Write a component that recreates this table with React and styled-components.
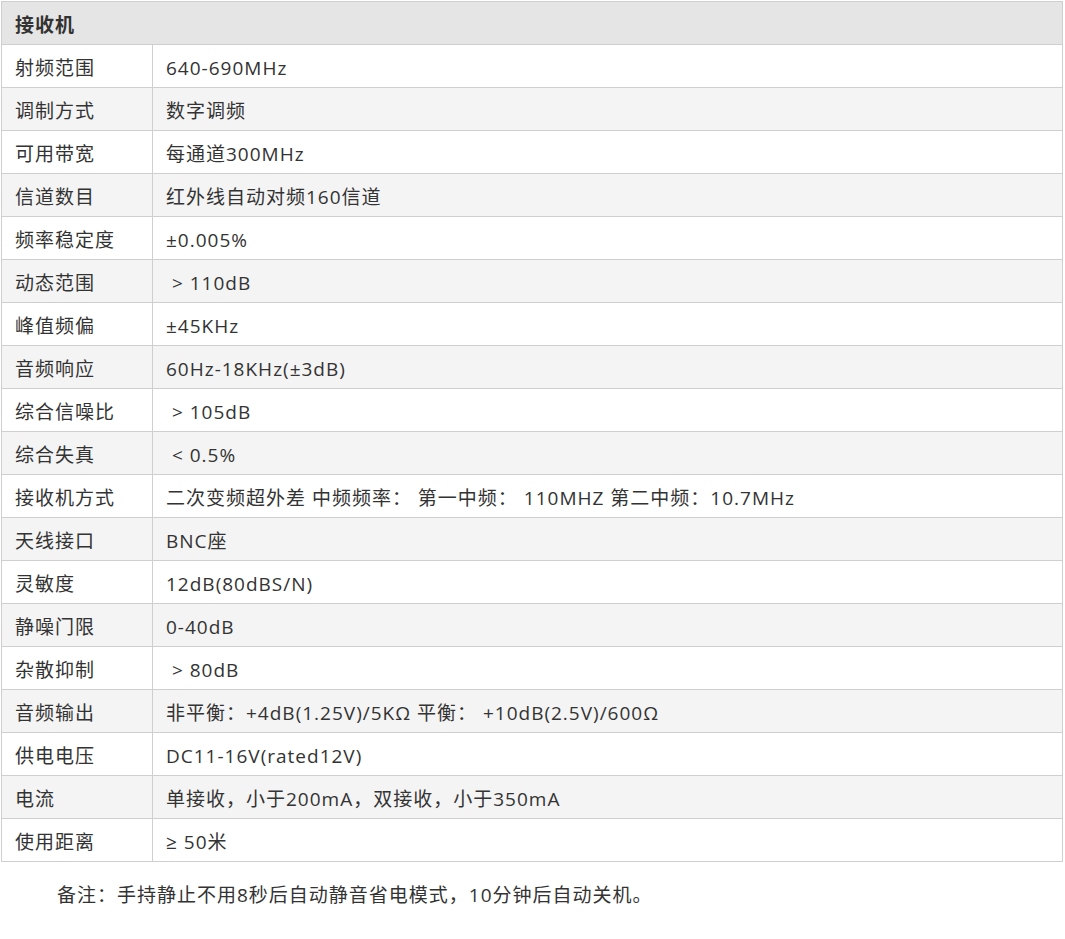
import React from "react";
import styled, { createGlobalStyle } from "styled-components";

const Global = createGlobalStyle`
  html, body { margin: 0; padding: 0; background: #fff; }
  body { font-family: "Open Sans", "Noto Sans", "Noto Sans CJK SC", sans-serif; color: #333; }
`;

const Page = styled.div`
  padding: 1px 0 0 1px;
`;

const Table = styled.table`
  width: 1062px;
  border-collapse: collapse;
  font-size: 19px;
  letter-spacing: 1px;
  table-layout: fixed;
`;

const Row = styled.tr`
  background: ${(p) => (p.$alt ? "#f4f4f4" : "#ffffff")};
`;

const HeadRow = styled.tr`
  background: #e5e5e5;
`;

const HeadCell = styled.th`
  border: 1px solid #cfcfcf;
  padding: 10px 13px 6px;
  line-height: 26px;
  text-align: left;
  font-weight: 700;
  color: #333;
`;

const Cell = styled.td`
  border: 1px solid #cfcfcf;
  padding: 10px 13px 6px;
  line-height: 26px;
  color: #333;
  white-space: nowrap;
`;

const Note = styled.p`
  margin: 21px 0 0 56px;
  font-size: 19px;
  letter-spacing: 1px;
  line-height: 24px;
  color: #333;
`;

const rows = [
  ["射频范围", "640-690MHz"],
  ["调制方式", "数字调频"],
  ["可用带宽", "每通道300MHz"],
  ["信道数目", "红外线自动对频160信道"],
  ["频率稳定度", "±0.005%"],
  ["动态范围", "\u00a0> 110dB"],
  ["峰值频偏", "±45KHz"],
  ["音频响应", "60Hz-18KHz(±3dB)"],
  ["综合信噪比", "\u00a0> 105dB"],
  ["综合失真", "\u00a0< 0.5%"],
  ["接收机方式", "二次变频超外差 中频频率： 第一中频： 110MHZ 第二中频：10.7MHz"],
  ["天线接口", "BNC座"],
  ["灵敏度", "12dB(80dBS/N)"],
  ["静噪门限", "0-40dB"],
  ["杂散抑制", "\u00a0> 80dB"],
  ["音频输出", "非平衡：+4dB(1.25V)/5KΩ 平衡： +10dB(2.5V)/600Ω"],
  ["供电电压", "DC11-16V(rated12V)"],
  ["电流", "单接收，小于200mA，双接收，小于350mA"],
  ["使用距离", "≥ 50米"],
];

export default function App() {
  return (
    <Page>
      <Global />
      <Table>
        <colgroup>
          <col style={{ width: "151px" }} />
          <col />
        </colgroup>
        <tbody>
          <HeadRow>
            <HeadCell colSpan={2}>接收机</HeadCell>
          </HeadRow>
          {rows.map(([k, v], i) => (
            <Row key={k} $alt={i % 2 === 1}>
              <Cell>{k}</Cell>
              <Cell>{v}</Cell>
            </Row>
          ))}
        </tbody>
      </Table>
      <Note>备注：手持静止不用8秒后自动静音省电模式，10分钟后自动关机。</Note>
    </Page>
  );
}
